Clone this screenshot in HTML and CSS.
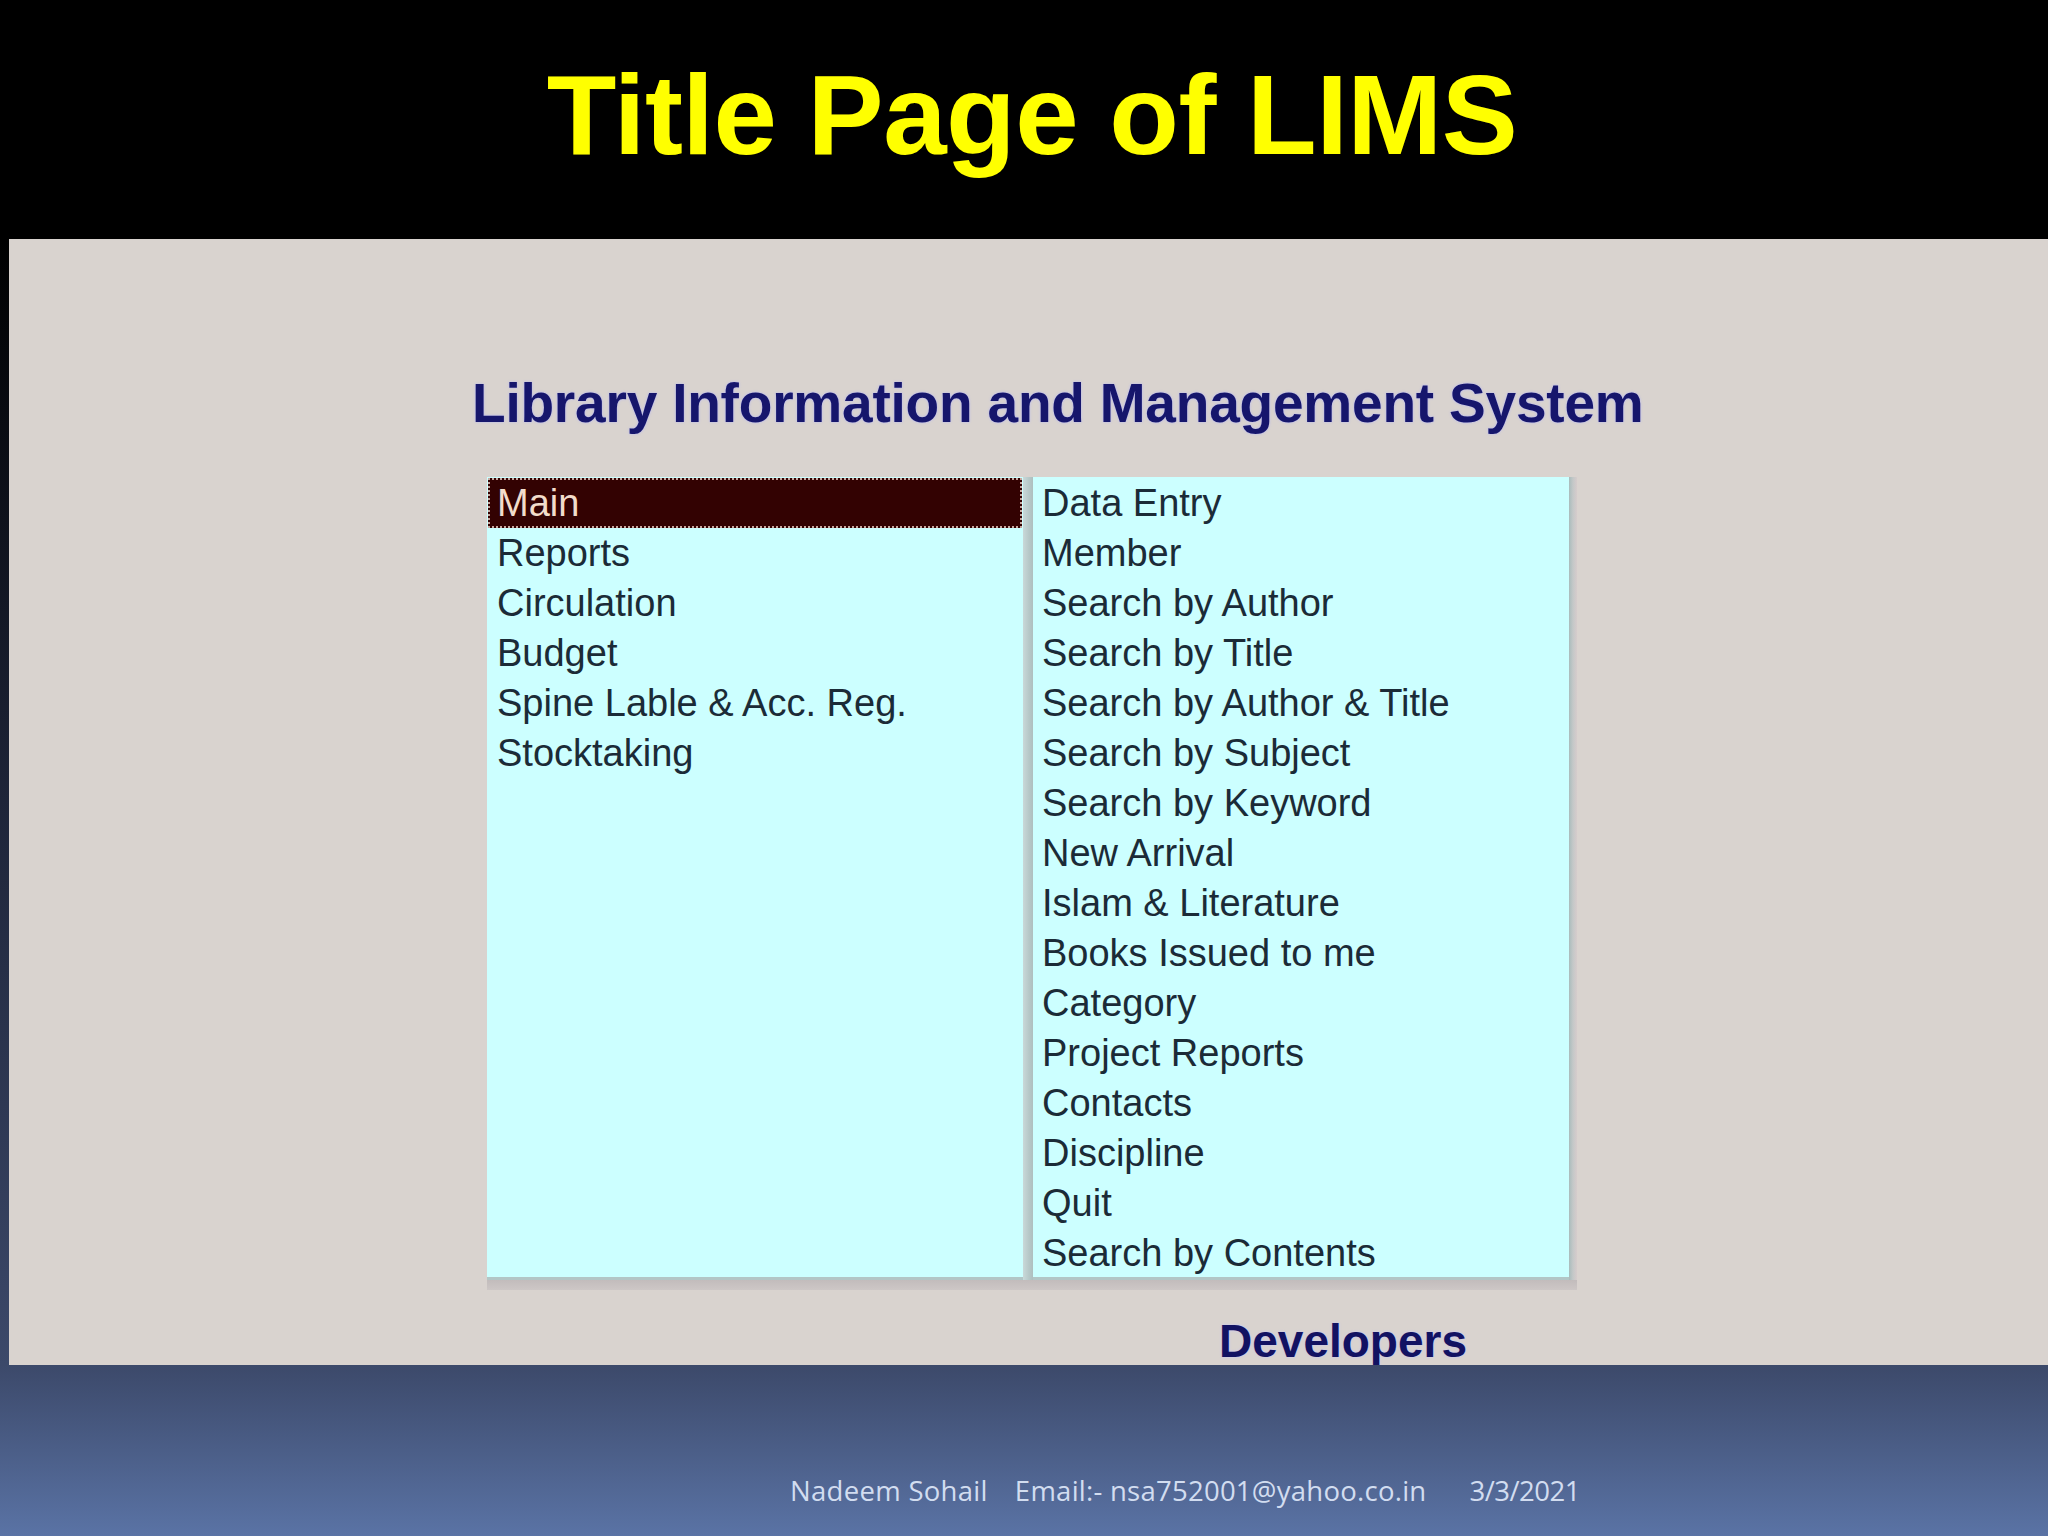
FILE: index.html
```html
<!DOCTYPE html>
<html>
<head>
<meta charset="utf-8">
<title>Title Page of LIMS</title>
<link rel="stylesheet" href="styles.css">
</head>
<body>
<div class="slide">
  <header class="header">
    <h1 class="title">Title Page of LIMS</h1>
  </header>
  <section class="panel">
    <h2 class="app-title">Library Information and Management System</h2>
    <div class="lists">
      <ul class="box box-left">
        <li class="item selected">Main</li>
        <li class="item">Reports</li>
        <li class="item">Circulation</li>
        <li class="item">Budget</li>
        <li class="item">Spine Lable &amp; Acc. Reg.</li>
        <li class="item">Stocktaking</li>
      </ul>
      <div class="sep"></div>
      <ul class="box box-right">
        <li class="item">Data Entry</li>
        <li class="item">Member</li>
        <li class="item">Search by Author</li>
        <li class="item">Search by Title</li>
        <li class="item">Search by Author &amp; Title</li>
        <li class="item">Search by Subject</li>
        <li class="item">Search by Keyword</li>
        <li class="item">New Arrival</li>
        <li class="item">Islam &amp; Literature</li>
        <li class="item">Books Issued to me</li>
        <li class="item">Category</li>
        <li class="item">Project Reports</li>
        <li class="item">Contacts</li>
        <li class="item">Discipline</li>
        <li class="item">Quit</li>
        <li class="item">Search by Contents</li>
      </ul>
      <div class="edge"></div>
    </div>
    <h3 class="developers">Developers</h3>
  </section>
  <footer class="footer">
    <span class="f-name">Nadeem Sohail</span>
    <span class="f-mail">Email:- nsa752001@yahoo.co.in</span>
    <span class="f-date">3/3/2021</span>
  </footer>
</div>
</body>
</html>
```

FILE: styles.css
```css
html, body {
  margin: 0;
  padding: 0;
}
body {
  width: 2048px;
  height: 1536px;
  overflow: hidden;
  background: linear-gradient(to bottom, #000 0px, #000 240px, #1e2438 800px, #3c496a 1365px, #5a73a5 1536px);
  font-family: "Liberation Sans", Arial, sans-serif;
}
.slide {
  width: 2048px;
  height: 1536px;
  display: flex;
  flex-direction: column;
}
.header {
  height: 239px;
  background: #000;
  box-sizing: border-box;
  padding-top: 58px;
  padding-left: 16px;
}
.title {
  margin: 0;
  font-family: "Liberation Sans", Arial, sans-serif;
  font-weight: bold;
  font-size: 114px;
  line-height: 114px;
  color: #ffff00;
  text-align: center;
  letter-spacing: -0.5px;
}
.panel {
  margin-left: 9px;
  height: 1126px;
  background: #d9d3cf;
  overflow: hidden;
  box-sizing: border-box;
  padding-top: 137px;
}
.app-title {
  margin: 0;
  padding-left: 463px;
  font-family: "Liberation Sans", Arial, sans-serif;
  font-weight: bold;
  font-size: 55px;
  line-height: 55px;
  letter-spacing: -0.2px;
  color: #16166c;
  text-shadow: 0 0 3px #b9b9ec, 0 0 1px #c8c8f4;
  white-space: nowrap;
}
.lists {
  margin-top: 46px;
  margin-left: 478px;
  display: flex;
  width: 1090px;
  height: 813px;
  background: linear-gradient(to bottom, transparent 0, transparent 803px, #c2bcbc 803px, #cdc7c6 813px);
}
.box {
  list-style: none;
  margin: 0;
  padding: 1px 0 0 0;
  width: 536px;
  height: 803px;
  box-sizing: border-box;
  background: #ccffff;
  border-bottom: 3px solid #b2c6c6;
}
.box-left {
  padding-left: 1px;
}
.sep {
  width: 10px;
  height: 803px;
  background: linear-gradient(to right, #c9d9d9, #b6c8c8 60%, #aebfbf);
}
.edge {
  width: 8px;
  height: 803px;
  background: linear-gradient(to right, #a9bcbc, #c4c8c8 50%, #d6cccc);
}
.item {
  height: 50px;
  line-height: 50px;
  padding-left: 9px;
  font-family: "Liberation Sans", Arial, sans-serif;
  font-size: 38px;
  color: #1b2b37;
  white-space: nowrap;
  box-sizing: border-box;
}
.item.selected {
  background: #330202;
  color: #f2dccb;
  outline: 2px dotted #c8a8a0;
  outline-offset: -2px;
  margin-right: 1px;
}
.developers {
  margin: 0;
  margin-top: 28px;
  padding-left: 1210px;
  font-family: "Liberation Sans", Arial, sans-serif;
  font-weight: bold;
  font-size: 46px;
  line-height: 46px;
  color: #121262;
  text-shadow: 0 0 3px #c6c6f0, 0 0 1px #d0d0f6;
  white-space: nowrap;
}
.footer {
  flex: 1;
  box-sizing: border-box;
  padding-top: 107px;
  padding-left: 790px;
  display: flex;
  align-items: flex-start;
  font-family: "Open Sans", "Liberation Sans", sans-serif;
  font-size: 27.5px;
  color: #d2ddf0;
  white-space: nowrap;
}
.f-name {
  letter-spacing: 0.3px;
}
.f-mail {
  margin-left: 27px;
  letter-spacing: 0.25px;
}
.f-date {
  margin-left: 43px;
  letter-spacing: -0.5px;
}
```
